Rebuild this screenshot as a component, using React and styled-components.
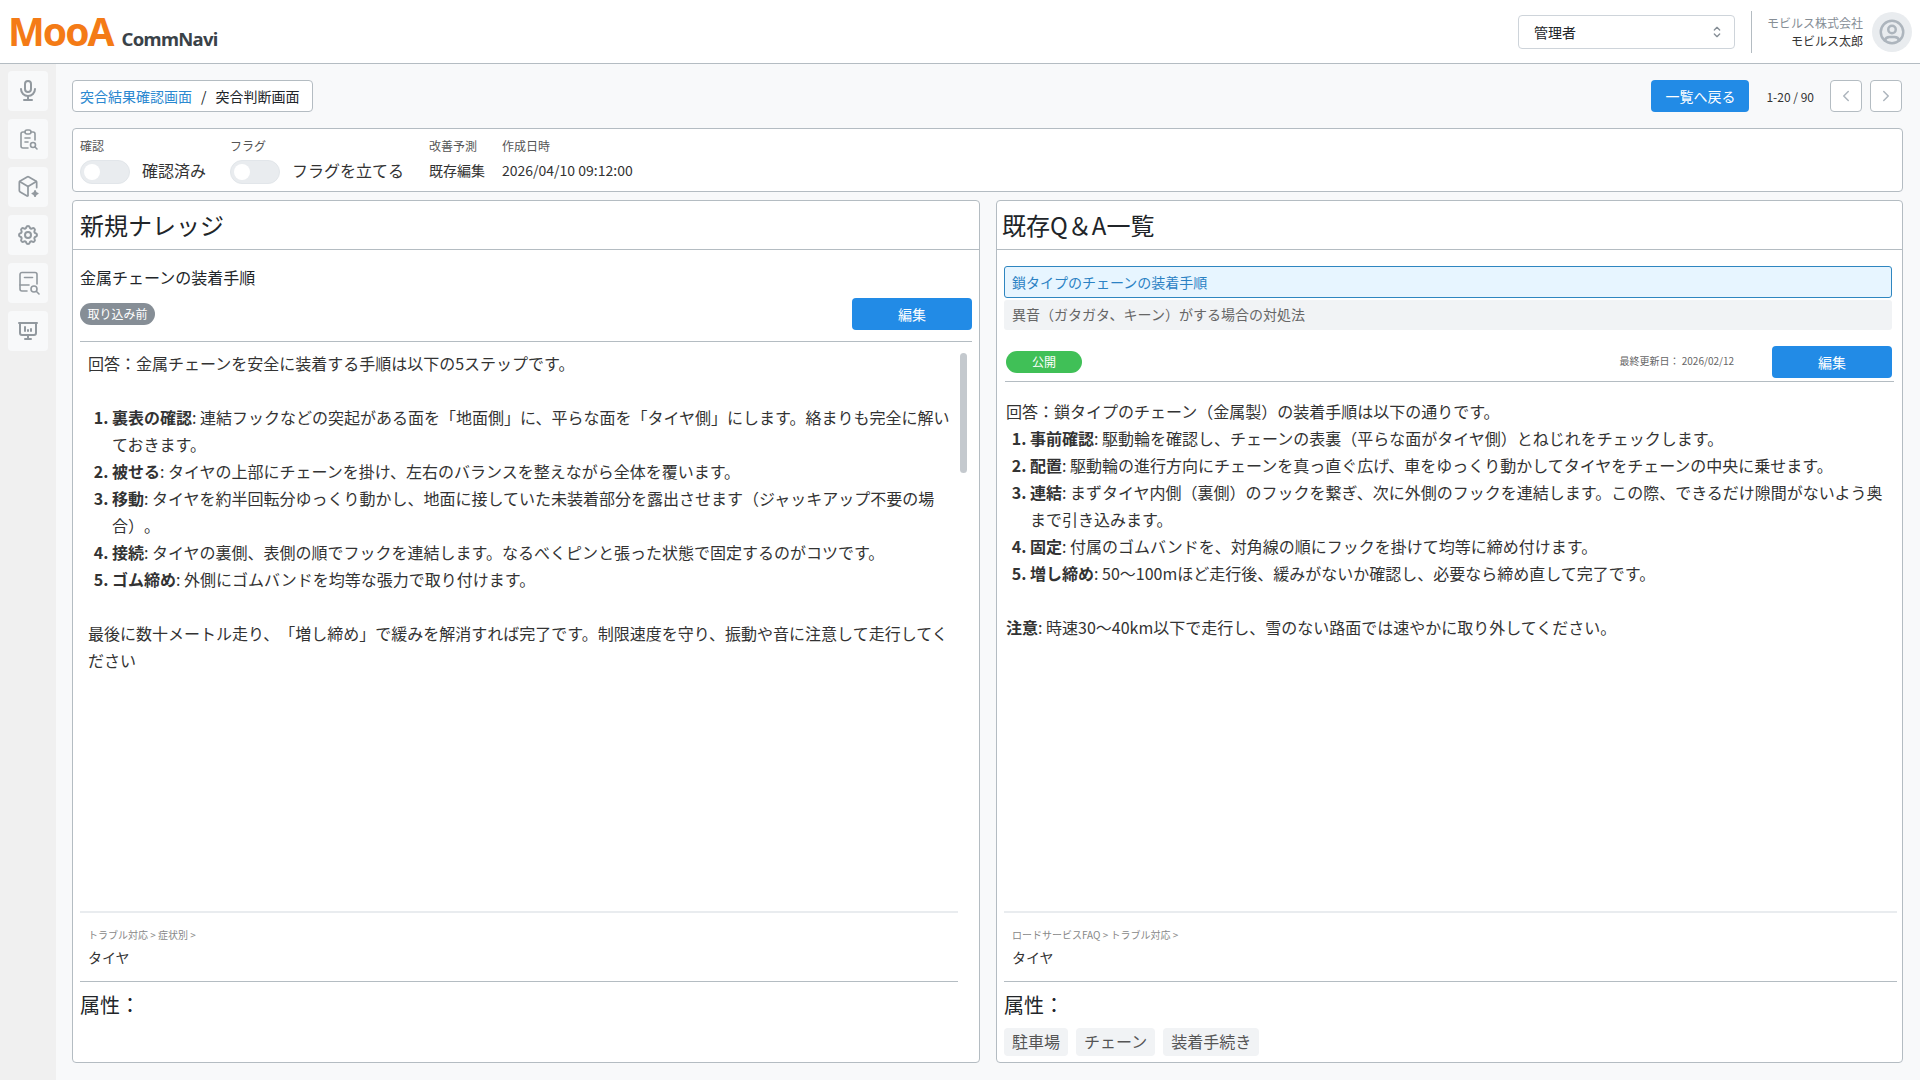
import React from "react";
import styled, { createGlobalStyle } from "styled-components";
import {
  TbMicrophone,
  TbSettings,
  TbPresentationAnalytics,
  TbUserCircle,
  TbSelector,
  TbChevronLeft,
  TbChevronRight,
} from "react-icons/tb";

const Global = createGlobalStyle`
  html, body { margin: 0; padding: 0; height: 100%; }
  body {
    background: #f8f9fa;
    color: #212529;
    font-family: "Noto Sans CJK JP", "Noto Sans", sans-serif;
    text-spacing-trim: space-all;
    overflow: hidden;
  }
  * { box-sizing: border-box; }
`;

const Page = styled.div`
  width: 1920px;
  height: 1080px;
  display: flex;
  flex-direction: column;
`;

const Header = styled.header`
  height: 64px;
  flex: none;
  background: #fff;
  border-bottom: 1px solid #b4bcc2;
  display: flex;
  align-items: center;
  padding: 0 8px;
`;
const Logo = styled.div`
  display: flex;
  align-items: baseline;
  gap: 9px;
  margin-top: -2px;
`;
const LogoMark = styled.span`
  font-family: "Noto Sans", sans-serif;
  font-size: 39px;
  font-weight: 700;
  line-height: 44px;
  color: #f47b16;
  letter-spacing: -2px;
`;
const LogoName = styled.span`
  font-family: "Noto Sans", sans-serif;
  font-size: 18.500px;
  font-weight: 700;
  line-height: 24px;
  color: #3a4248;
  letter-spacing: -0.7px;
`;
const HeaderRight = styled.div`
  margin-left: auto;
  display: flex;
  align-items: center;
`;
const RoleSelect = styled.div`
  width: 217px;
  height: 34px;
  border: 1px solid #ced4da;
  border-radius: 4px;
  background: #fff;
  display: flex;
  align-items: center;
  justify-content: space-between;
  padding: 0 9px 0 15px;
  font-size: 14px;
  color: #212529;
`;
const HeaderSep = styled.div`
  width: 1px;
  height: 42px;
  background: #b4bcc2;
  margin: 0 13px 0 16px;
`;
const UserInfo = styled.div`
  width: 98px;
  text-align: right;
  font-size: 12px;
  line-height: 18px;
  color: #868e96;
  margin-right: 9px;
`;
const UserName = styled.div`
  color: #333;
`;
const Avatar = styled.div`
  width: 40px;
  height: 40px;
  border-radius: 50%;
  background: #e9ecef;
  color: #adb5bd;
  display: flex;
  align-items: center;
  justify-content: center;
`;

const Body = styled.div`
  flex: 1;
  min-height: 0;
  display: flex;
`;
const Sidebar = styled.nav`
  width: 56px;
  flex: none;
  background: #f0f0f0;
  display: flex;
  flex-direction: column;
  align-items: center;
  gap: 8px;
  padding-top: 7px;
`;
const NavButton = styled.div`
  width: 40px;
  height: 40px;
  border-radius: 4px;
  background: #f8f9fa;
  color: #92999f;
  display: flex;
  align-items: center;
  justify-content: center;
`;
const Main = styled.main`
  flex: 1;
  min-width: 0;
  display: flex;
  flex-direction: column;
  padding: 16px 17px 17px 16px;
`;
const TopRow = styled.div`
  height: 32px;
  flex: none;
  display: flex;
  align-items: center;
  margin-bottom: 16px;
`;
const Breadcrumb = styled.div`
  width: 241px;
  height: 32px;
  border: 1px solid #b4bcc2;
  border-radius: 4px;
  background: #fff;
  display: flex;
  align-items: center;
  padding: 0 7px;
  font-size: 14px;
  color: #212529;
`;
const CrumbLink = styled.span`
  color: #2b88d0;
`;
const CrumbSep = styled.span`
  margin: 0 9px;
`;
const TopActions = styled.div`
  margin-left: auto;
  margin-right: 1px;
  display: flex;
  align-items: center;
`;
const BackButton = styled.div`
  width: 98px;
  height: 32px;
  border-radius: 4px;
  background: #228be6;
  color: #fff;
  font-size: 14px;
  display: flex;
  align-items: center;
  justify-content: center;
`;
const PageCount = styled.div`
  font-size: 12px;
  color: #333;
  margin: 0 16px 0 17px;
  white-space: nowrap;
`;
const PagerButton = styled.div`
  width: 32px;
  height: 32px;
  border: 1px solid #b4bcc2;
  border-radius: 4px;
  background: #fff;
  color: #adb5bd;
  display: flex;
  align-items: center;
  justify-content: center;
  margin-left: ${(p) => (p.$next ? "8px" : "0")};
`;

const InfoBar = styled.section`
  height: 64px;
  flex: none;
  background: #fff;
  border: 1px solid #b4bcc2;
  border-radius: 4px;
  display: flex;
  padding: 8px 7px 0;
  margin-bottom: 8px;
`;
const InfoCol = styled.div`
  width: ${(p) => p.$w};
  flex: none;
`;
const InfoLabel = styled.div`
  font-size: 12px;
  line-height: 18px;
  color: #555;
  margin-bottom: 5px;
`;
const InfoValue = styled.div`
  font-size: 14px;
  line-height: 20px;
  color: #333;
`;
const SwitchRow = styled.div`
  display: flex;
  align-items: center;
  gap: 12px;
  font-size: 16px;
  line-height: 24px;
  color: #333;
`;
const SwitchText = styled.span`
  margin-top: -4px;
`;
const SwitchTrack = styled.div`
  width: 50px;
  height: 24px;
  border-radius: 12px;
  background: #e9ecef;
  border: 1px solid #e2e6ea;
  display: flex;
  align-items: center;
  padding-left: 3px;
`;
const SwitchThumb = styled.div`
  width: 16px;
  height: 16px;
  border-radius: 50%;
  background: #fff;
`;

const Panels = styled.div`
  flex: 1;
  min-height: 0;
  display: grid;
  grid-template-columns: 908px 907px;
  gap: 16px;
`;
const Panel = styled.section`
  background: #fff;
  border: 1px solid #b4bcc2;
  border-radius: 4px;
  display: flex;
  flex-direction: column;
  min-height: 0;
`;
const PanelTitle = styled.h2`
  margin: 0;
  height: 49px;
  flex: none;
  padding: 0 ${(p) => p.$inset || "7px"};
  border-bottom: 1px solid #b4bcc2;
  font-size: 24px;
  font-weight: 400;
  line-height: 47px;
  color: #212529;
`;
const PanelHeadBlock = styled.div`
  flex: none;
  padding: ${(p) => p.$pad};
`;
const QTitle = styled.div`
  font-size: 16px;
  line-height: 24px;
  color: #212529;
  margin-bottom: 9px;
`;
const MetaRow = styled.div`
  display: flex;
  align-items: center;
  justify-content: space-between;
  height: 32px;
  padding: ${(p) => p.$pad || "0"};
`;
const Badge = styled.span`
  width: ${(p) => p.$w};
  height: 22px;
  border-radius: 11px;
  background: ${(p) => p.$bg};
  color: #fff;
  font-size: 12px;
  line-height: 22px;
  text-align: center;
`;
const UpdatedAt = styled.span`
  margin-left: auto;
  margin-right: 38px;
  font-size: 10px;
  line-height: 14px;
  margin-top: -2px;
  color: #666;
`;
const EditButton = styled.div`
  width: 120px;
  height: 32px;
  border-radius: 4px;
  background: #228be6;
  color: #fff;
  font-size: 14px;
  display: flex;
  align-items: center;
  justify-content: center;
`;
const Rule = styled.hr`
  margin: ${(p) => p.$m || "0"};
  border: 0;
  border-top: 1px solid #b4bcc2;
  flex: none;
`;
const QList = styled.div`
  display: flex;
  flex-direction: column;
  gap: 2px;
  margin-right: 3px;
  margin-bottom: 16px;
`;
const QItem = styled.div`
  height: ${(p) => (p.$active ? "32px" : "30px")};
  border-radius: 3px;
  font-size: 14px;
  line-height: ${(p) => (p.$active ? "30px" : "28px")};
  color: ${(p) => (p.$active ? "#2b82c4" : "#666")};
  background: ${(p) => (p.$active ? "#e7f5ff" : "#f1f3f5")};
  border: ${(p) => (p.$active ? "1px solid #2f86c0" : "0")};
  padding: 0 ${(p) => (p.$active ? "7px" : "8px")};
`;
const Answer = styled.div`
  flex: 1;
  min-height: 0;
  position: relative;
  padding: ${(p) => p.$pad};
  font-size: 16px;
  line-height: 27px;
  color: #333;
`;
const AnswerText = styled.p`
  margin: 0;
`;
const Steps = styled.ol`
  margin: 0;
  padding-left: 24px;
  li::marker { font-weight: 700; }
`;
const ScrollThumb = styled.div`
  position: absolute;
  top: 11px;
  right: 12px;
  width: 7px;
  height: 120px;
  border-radius: 4px;
  background: #c4c9ce;
`;
const Footer = styled.div`
  flex: none;
  margin: ${(p) => p.$m};
`;
const ThickRule = styled.div`
  height: 2px;
  background: #e9ecef;
`;
const CategoryBlock = styled.div`
  height: 69px;
  padding: 14px 8px 0;
  border-bottom: 1px solid #b4bcc2;
`;
const CategoryPath = styled.div`
  font-size: 10px;
  line-height: 15px;
  color: #888;
`;
const CategoryName = styled.div`
  font-size: 14px;
  line-height: 21px;
  color: #333;
  margin-top: 5px;
`;
const AttrHead = styled.div`
  font-size: 20px;
  line-height: 30px;
  color: #212529;
  margin-top: 8px;
`;
const Chips = styled.div`
  display: flex;
  gap: 8px;
  height: 28px;
  margin-top: 8px;
  margin-bottom: 6px;
`;
const Chip = styled.span`
  height: 28px;
  padding: 0 8px;
  border-radius: 4px;
  background: #f1f3f5;
  font-size: 16px;
  line-height: 26px;
  color: #555;
`;

const IconSvg = ({ size = 24, children }) => (
  <svg width={size} height={size} viewBox="0 0 24 24" fill="none" stroke="currentColor" strokeWidth="1.6" strokeLinecap="round" strokeLinejoin="round">
    {children}
  </svg>
);

const ClipboardFind = () => (
  <IconSvg>
    <path d="M9 5H7a2 2 0 0 0-2 2v12a2 2 0 0 0 2 2h5" />
    <path d="M15 5h2a2 2 0 0 1 2 2v6" />
    <rect x="9" y="3" width="6" height="4" rx="2" />
    <path d="M9 11h5" />
    <path d="M9 15h3" />
    <circle cx="17" cy="18" r="2.500" />
    <path d="M19 20l2 2" />
  </IconSvg>
);

const CubeSpark = () => (
  <IconSvg size={26}>
    <path d="M20 12.500V7.800a1.600 1.600 0 0 0-.8-1.400l-6.400-3.700a1.600 1.600 0 0 0-1.600 0L4.800 6.400A1.600 1.600 0 0 0 4 7.800v7.400a1.600 1.600 0 0 0 .8 1.400l6.400 3.700" />
    <path d="M4.300 6.900 12 11.500l7.700-4.600" />
    <path d="M12 11.500V20" />
    <path d="M18.500 15.500c.3 1.600 1 2.300 2.500 2.500-1.500.3-2.200 1-2.500 2.500-.3-1.500-1-2.200-2.500-2.500 1.500-.2 2.200-.9 2.500-2.500z" fill="currentColor" />
  </IconSvg>
);

const DocFind = () => (
  <IconSvg>
    <path d="M11 20H6a2 2 0 0 1-2-2V3.500a2 2 0 0 1 2-2h13a2 2 0 0 1 2 2V13" />
    <path d="M8.500 6.500h8" />
    <path d="M4 14h9" />
    <circle cx="18" cy="18" r="3" />
    <path d="M20.500 20.500 23 23" />
  </IconSvg>
);

const navItems = [
  <TbMicrophone key="a" size={24} />,
  <ClipboardFind key="b" />,
  <CubeSpark key="c" />,
  <TbSettings key="d" size={24} />,
  <DocFind key="e" />,
  <TbPresentationAnalytics key="f" size={24} />,
];

const leftSteps = [
  ["裏表の確認", ": 連結フックなどの突起がある面を「地面側」に、平らな面を「タイヤ側」にします。絡まりも完全に解いておきます。"],
  ["被せる", ": タイヤの上部にチェーンを掛け、左右のバランスを整えながら全体を覆います。"],
  ["移動", ": タイヤを約半回転分ゆっくり動かし、地面に接していた未装着部分を露出させます（ジャッキアップ不要の場合）。"],
  ["接続", ": タイヤの裏側、表側の順でフックを連結します。なるべくピンと張った状態で固定するのがコツです。"],
  ["ゴム締め", ": 外側にゴムバンドを均等な張力で取り付けます。"],
];
const rightSteps = [
  ["事前確認", ": 駆動輪を確認し、チェーンの表裏（平らな面がタイヤ側）とねじれをチェックします。"],
  ["配置", ": 駆動輪の進行方向にチェーンを真っ直ぐ広げ、車をゆっくり動かしてタイヤをチェーンの中央に乗せます。"],
  ["連結", ": まずタイヤ内側（裏側）のフックを繋ぎ、次に外側のフックを連結します。この際、できるだけ隙間がないよう奥まで引き込みます。"],
  ["固定", ": 付属のゴムバンドを、対角線の順にフックを掛けて均等に締め付けます。"],
  ["増し締め", ": 50〜100mほど走行後、緩みがないか確認し、必要なら締め直して完了です。"],
];

const StepList = ({ items }) => (
  <Steps>
    {items.map(([head, text]) => (
      <li key={head}>
        <strong>{head}</strong>
        {text}
      </li>
    ))}
  </Steps>
);

export default function App() {
  return (
    <Page>
      <Global />
      <Header>
        <Logo>
          <LogoMark>MooA</LogoMark>
          <LogoName>CommNavi</LogoName>
        </Logo>
        <HeaderRight>
          <RoleSelect>
            管理者
            <TbSelector size={16} color="#868e96" />
          </RoleSelect>
          <HeaderSep />
          <UserInfo>
            モビルス株式会社
            <UserName>モビルス太郎</UserName>
          </UserInfo>
          <Avatar>
            <TbUserCircle size={30} />
          </Avatar>
        </HeaderRight>
      </Header>
      <Body>
        <Sidebar>
          {navItems.map((icon, i) => (
            <NavButton key={i}>{icon}</NavButton>
          ))}
        </Sidebar>
        <Main>
          <TopRow>
            <Breadcrumb>
              <CrumbLink>突合結果確認画面</CrumbLink>
              <CrumbSep>/</CrumbSep>
              突合判断画面
            </Breadcrumb>
            <TopActions>
              <BackButton>一覧へ戻る</BackButton>
              <PageCount>1-20 / 90</PageCount>
              <PagerButton>
                <TbChevronLeft size={18} />
              </PagerButton>
              <PagerButton $next>
                <TbChevronRight size={18} />
              </PagerButton>
            </TopActions>
          </TopRow>
          <InfoBar>
            <InfoCol $w="150px">
              <InfoLabel>確認</InfoLabel>
              <SwitchRow>
                <SwitchTrack>
                  <SwitchThumb />
                </SwitchTrack>
                <SwitchText>確認済み</SwitchText>
              </SwitchRow>
            </InfoCol>
            <InfoCol $w="199px">
              <InfoLabel>フラグ</InfoLabel>
              <SwitchRow>
                <SwitchTrack>
                  <SwitchThumb />
                </SwitchTrack>
                <SwitchText>フラグを立てる</SwitchText>
              </SwitchRow>
            </InfoCol>
            <InfoCol $w="73px">
              <InfoLabel>改善予測</InfoLabel>
              <InfoValue>既存編集</InfoValue>
            </InfoCol>
            <InfoCol $w="200px">
              <InfoLabel>作成日時</InfoLabel>
              <InfoValue>2026/04/10 09:12:00</InfoValue>
            </InfoCol>
          </InfoBar>
          <Panels>
            <Panel>
              <PanelTitle>新規ナレッジ</PanelTitle>
              <PanelHeadBlock $pad="15px 7px 0">
                <QTitle>金属チェーンの装着手順</QTitle>
                <MetaRow>
                  <Badge $w="75px" $bg="#868e96">取り込み前</Badge>
                  <EditButton>編集</EditButton>
                </MetaRow>
                <Rule $m="11px 0 0" />
              </PanelHeadBlock>
              <Answer $pad="8px 28px 0 15px">
                <AnswerText>回答：金属チェーンを安全に装着する手順は以下の5ステップです。</AnswerText>
                <AnswerText>&nbsp;</AnswerText>
                <StepList items={leftSteps} />
                <AnswerText>&nbsp;</AnswerText>
                <AnswerText>
                  最後に数十メートル走り、「増し締め」で緩みを解消すれば完了です。制限速度を守り、振動や音に注意して走行してください
                </AnswerText>
                <ScrollThumb />
              </Answer>
              <Footer $m="0 21px 0 7px">
                <ThickRule />
                <CategoryBlock>
                  <CategoryPath>トラブル対応 &gt; 症状別 &gt;</CategoryPath>
                  <CategoryName>タイヤ</CategoryName>
                </CategoryBlock>
                <AttrHead>属性：</AttrHead>
                <Chips />
              </Footer>
            </Panel>
            <Panel>
              <PanelTitle $inset="5px">既存Q＆A一覧</PanelTitle>
              <PanelHeadBlock $pad="16px 7px 0">
                <QList>
                  <QItem $active>鎖タイプのチェーンの装着手順</QItem>
                  <QItem>異音（ガタガタ、キーン）がする場合の対処法</QItem>
                </QList>
                <MetaRow $pad="0 3px 0 2px">
                  <Badge $w="76px" $bg="#40c057">公開</Badge>
                  <UpdatedAt>最終更新日： 2026/02/12</UpdatedAt>
                  <EditButton>編集</EditButton>
                </MetaRow>
                <Rule $m="3px 1px 0 1px" />
              </PanelHeadBlock>
              <Answer $pad="16px 14px 0 9px">
                <AnswerText>回答：鎖タイプのチェーン（金属製）の装着手順は以下の通りです。</AnswerText>
                <StepList items={rightSteps} />
                <AnswerText>&nbsp;</AnswerText>
                <AnswerText>
                  <strong>注意</strong>: 時速30〜40km以下で走行し、雪のない路面では速やかに取り外してください。
                </AnswerText>
              </Answer>
              <Footer $m="0 5px 0 7px">
                <ThickRule />
                <CategoryBlock>
                  <CategoryPath>ロードサービスFAQ &gt; トラブル対応 &gt;</CategoryPath>
                  <CategoryName>タイヤ</CategoryName>
                </CategoryBlock>
                <AttrHead>属性：</AttrHead>
                <Chips>
                  <Chip>駐車場</Chip>
                  <Chip>チェーン</Chip>
                  <Chip>装着手続き</Chip>
                </Chips>
              </Footer>
            </Panel>
          </Panels>
        </Main>
      </Body>
    </Page>
  );
}
